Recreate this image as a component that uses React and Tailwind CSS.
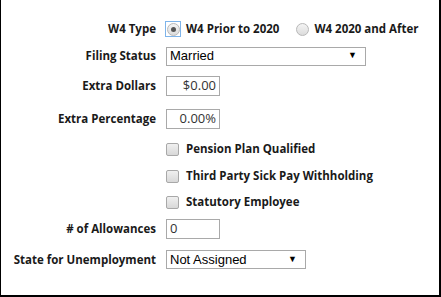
import React from "react";

const labelCls =
  "w-[165px] shrink-0 pr-[10px] text-right text-[11.5px] font-bold text-[#1a1a1a] whitespace-nowrap";
const optCls = "text-[11.5px] font-bold text-[#1a1a1a] whitespace-nowrap";

function Radio({ checked, focused }) {
  return (
    <span
      className={
        "flex h-[16px] w-[16px] items-center justify-center " +
        (focused ? "border border-[#7eb4ea]" : "border border-transparent")
      }
    >
      <span className="flex h-[13px] w-[13px] items-center justify-center rounded-full border border-[#b8b8b8] bg-gradient-to-b from-[#f4f4f4] to-[#dcdcdc]">
        {checked && <span className="h-[5px] w-[5px] rounded-full bg-[#555]" />}
      </span>
    </span>
  );
}

function Checkbox() {
  return (
    <span className="h-[13px] w-[13px] rounded-[2px] border border-[#a8a8a8] bg-gradient-to-b from-[#f0f0f0] to-[#d8d8d8]" />
  );
}

function Select({ value, width }) {
  return (
    <div
      className={
        "flex h-[19px] items-center justify-between border border-[#a9a9a9] bg-white pl-[3px] pr-[8px] font-['Liberation_Sans',Arial,sans-serif] text-[13px] text-black " +
        width
      }
    >
      <span>{value}</span>
      <span className="text-[9px]">▼</span>
    </div>
  );
}

function TextBox({ value, right }) {
  return (
    <div
      className={
        "flex h-[20px] w-[54px] items-center border border-[#a9a9a9] bg-white px-[3px] text-[13px] text-[#333] " +
        (right ? "justify-end" : "justify-start")
      }
    >
      {value}
    </div>
  );
}

function Row({ label, h, children }) {
  return (
    <div className={"flex items-center " + h}>
      <div className={labelCls}>{label}</div>
      <div className="flex items-center">{children}</div>
    </div>
  );
}

function CheckRow({ label, h }) {
  return (
    <div className={"flex items-center " + h}>
      <div className="w-[165px] shrink-0" />
      <Checkbox />
      <span className={"ml-[7px] " + optCls}>{label}</span>
    </div>
  );
}

export default function App() {
  return (
    <div className="h-[297px] w-[441px] bg-white font-['Open_Sans',sans-serif]">
      <div className="-ml-[1px] flex h-[297px] w-[442px] flex-col border-b-2 border-l-2 border-r-2 border-black pt-[16px]">
        <Row label="W4 Type" h="h-[26px]">
          <div className="-ml-[1px] flex items-center">
            <Radio checked focused />
            <span className={"ml-[5px] " + optCls}>W4 Prior to 2020</span>
            <span className="ml-[15px]">
              <Radio />
            </span>
            <span className={"ml-[4px] " + optCls}>W4 2020 and After</span>
          </div>
        </Row>
        <Row label="Filing Status" h="h-[28px]">
          <Select value="Married" width="w-[200px]" />
        </Row>
        <Row label="Extra Dollars" h="h-[32px]">
          <TextBox value="$0.00" right />
        </Row>
        <Row label="Extra Percentage" h="h-[33px]">
          <TextBox value="0.00%" right />
        </Row>
        <CheckRow label="Pension Plan Qualified" h="h-[28px]" />
        <CheckRow label="Third Party Sick Pay Withholding" h="h-[26px]" />
        <CheckRow label="Statutory Employee" h="h-[26px]" />
        <Row label="# of Allowances" h="h-[28px]">
          <TextBox value="0" />
        </Row>
        <Row label="State for Unemployment" h="h-[33px]">
          <Select value="Not Assigned" width="w-[140px]" />
        </Row>
      </div>
    </div>
  );
}
